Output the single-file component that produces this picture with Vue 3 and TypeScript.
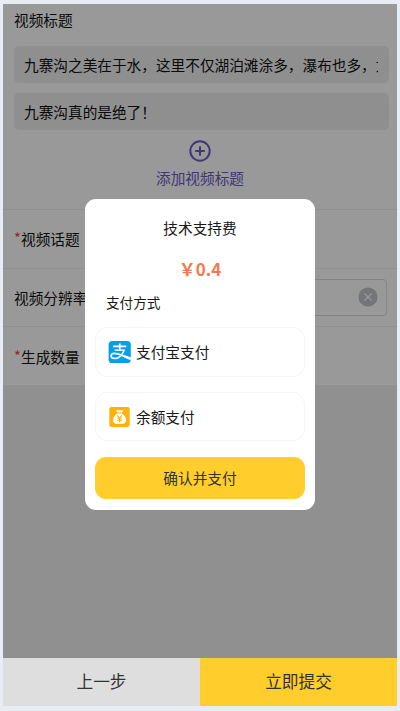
<script setup lang="ts">
import { ref } from 'vue'

interface PayMethod {
  id: 'alipay' | 'balance'
  label: string
}

const titles = ref<string[]>([
  '九寨沟之美在于水，这里不仅湖泊滩涂多，瀑布也多，尤其壮观',
  '九寨沟真的是绝了！',
])

const methods: PayMethod[] = [
  { id: 'alipay', label: '支付宝支付' },
  { id: 'balance', label: '余额支付' },
]
</script>

<template>
  <div class="page">
    <div class="phone">
      <main class="content">
        <section class="titles">
          <h2 class="heading">视频标题</h2>
          <div v-for="t in titles" :key="t" class="field"><span class="field-text">{{ t }}</span></div>
          <div class="add">
            <svg class="add-icon" viewBox="0 0 22 22">
              <circle cx="11" cy="11" r="9.7" />
              <path d="M11 6.2v9.6M6.2 11h9.6" />
            </svg>
            <span>添加视频标题</span>
          </div>
        </section>
        <section class="row"><span class="star">*</span>视频话题</section>
        <section class="row resolution">
          <span>视频分辨率</span>
          <div class="select">
            <svg class="clear" viewBox="0 0 20 20">
              <circle cx="10" cy="10" r="9.6" />
              <path d="M6.3 6.3l7.4 7.4M13.7 6.3l-7.4 7.4" />
            </svg>
          </div>
        </section>
        <section class="row last"><span class="star">*</span>生成数量</section>
      </main>

      <div class="mask">
        <div class="dialog">
          <div class="dialog-title">技术支持费</div>
          <div class="price">￥0.4</div>
          <div class="sub">支付方式</div>
          <div v-for="m in methods" :key="m.id" class="method" :class="m.id">
            <svg v-if="m.id === 'alipay'" class="icon" viewBox="0 0 24 24">
              <rect x="0.6" y="1" width="22.2" height="22" rx="3.6" fill="#069fe8" />
              <g fill="none" stroke="#fff">
                <path d="M5.2 6.300h13M11.800 3.600v6.600" stroke-width="1.700" />
                <path d="M6.600 10.100h9.900" stroke-width="1.400" />
                <path d="M16.200 9.800c-1.200 4.200-4.600 8.700-9.300 8.700-5 0-5-5.100-.6-5.100 4.600 0 8.700 2.900 16.300 5.100" stroke-width="1.600" />
              </g>
              <path d="M15.400 14.700c2.500 1.100 4.700 1.800 7.400 2.300v3.200c-3.500-1.200-6-2.500-8.800-4z" fill="#fff" />
            </svg>
            <svg v-else class="icon" viewBox="0 0 24 24">
              <rect x="1.300" y="2" width="20.400" height="20" rx="2.200" fill="#ffb20b" />
              <path d="M7.800 5.100q1.900.7 3.800 0 1.900.7 3.800 0l-1.500 2.500H9.300z" fill="#fff" />
              <path d="M9.100 8.500h4.900c2.500 1.700 4.100 4.100 4.100 6.400 0 3-2.300 4.200-6.600 4.200s-6.400-1.200-6.400-4.200c0-2.300 1.600-4.700 4-6.400z" fill="#fff" />
              <path d="M9.300 10.300l2.200 2.800 2.200-2.800M11.500 13v4.200M9.200 13.300h4.600M9.200 15.300h4.600" fill="none" stroke="#ffb20b" stroke-width="1.100" />
            </svg>
            <span>{{ m.label }}</span>
          </div>
          <button class="confirm" type="button">确认并支付</button>
        </div>
      </div>

      <footer class="footer">
        <button class="prev" type="button">上一步</button>
        <button class="submit" type="button">立即提交</button>
      </footer>
    </div>
  </div>
</template>

<style>
body {
  background: #e8edf4;
}
</style>

<style scoped>
.page {
  box-sizing: border-box;
  height: 711px;
  padding: 4px 3px 5px;
  overflow: hidden;
  background: #e8edf4;
  color: #1a1a1a;
  font: 14.67px/22px "Noto Sans CJK SC", sans-serif;
}

.phone {
  position: relative;
  display: flex;
  flex-direction: column;
  height: 701.5px;
  background: #f1f1f1;
}

.content {
  flex: 1;
  color: #111;
}

.titles {
  box-sizing: border-box;
  height: 206px;
  padding: 5px 8px 0 11px;
  background: #fff;
  border-bottom: 1px solid #f0f0f0;
}

.heading {
  margin: 0 0 15px;
  font-size: inherit;
  font-weight: 400;
  line-height: 22px;
}

.field {
  height: 37px;
  margin-bottom: 10px;
  padding: 0 11.5px 0 10px;
  border-radius: 5px;
  background: #efefef;
  line-height: 38px;
}

.field-text {
  display: block;
  overflow: hidden;
  white-space: nowrap;
}

.add {
  display: flex;
  flex-direction: column;
  align-items: center;
  padding-right: 3px;
  color: #6b5bc8;
}

.add-icon {
  width: 22px;
  height: 22px;
  margin-bottom: 5px;
  fill: none;
  stroke: currentColor;
  stroke-width: 2;
}

.row {
  box-sizing: border-box;
  display: flex;
  align-items: center;
  height: 59px;
  padding: 0 10px 0 11px;
  background: #fff;
  border-bottom: 1px solid #f0f0f0;
}

.star {
  width: 7px;
  margin-top: -2px;
  color: #e8444e;
}

.resolution {
  height: 58px;
  justify-content: space-between;
}

.select {
  box-sizing: border-box;
  display: flex;
  align-items: center;
  justify-content: flex-end;
  width: 270px;
  height: 37px;
  padding: 0 8px 2px 0;
  border: 1px solid #dcdcdc;
  border-radius: 4px;
}

.resolution > span {
  white-space: nowrap;
}

.clear {
  width: 20px;
  height: 20px;
  fill: #c0c4cc;
  stroke: none;
}

.clear path {
  stroke: #fff;
  stroke-width: 1.2;
}

.last {
  height: 58px;
  padding-top: 2px;
  border-bottom: 0;
}

.mask {
  position: absolute;
  inset: 0 0 47.5px;
  background: rgba(0, 0, 0, 0.4);
}

.dialog {
  box-sizing: border-box;
  width: 230px;
  height: 311px;
  margin: 195px 0 0 82px;
  padding: 18px 10px 0;
  border-radius: 11px;
  background: #fff;
}

.dialog-title {
  text-align: center;
}

.price {
  margin-top: 17px;
  color: #f27a50;
  font-size: 17px;
  font-weight: 700;
  line-height: 26px;
  text-align: center;
}

.sub {
  margin: 9px 0 14px 11px;
  font-size: 13.6px;
}

.method {
  box-sizing: border-box;
  display: flex;
  align-items: center;
  gap: 4px;
  height: 50px;
  margin-bottom: 15px;
  padding-left: 12px;
  border: 1px solid #f5f5f5;
  border-radius: 12px;
}

.balance {
  height: 49px;
  margin-bottom: 16px;
}

.icon {
  width: 24px;
  height: 24px;
}

button {
  padding: 0;
  border: 0;
  color: #333;
  font: inherit;
}

.confirm {
  display: block;
  width: 100%;
  height: 42px;
  border-radius: 11px;
  background: #ffce2d;
}

.footer {
  display: flex;
  height: 47.5px;
  font-size: 16.7px;
}

.footer button {
  padding-bottom: 2px;
}

.prev {
  width: 197px;
  background: #dedede;
}

.submit {
  flex: 1;
  background: #ffce2d;
}
</style>
